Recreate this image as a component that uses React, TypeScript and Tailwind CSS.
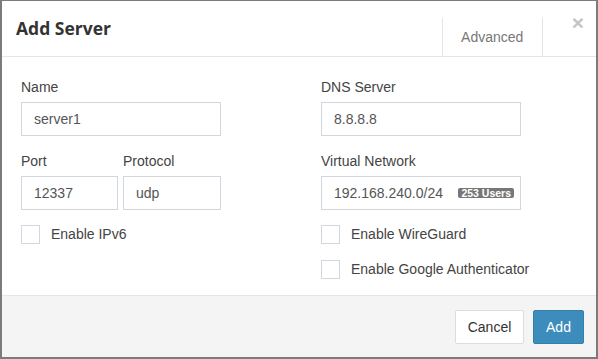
import { useState } from "react"

function Field({ label, value, className = "" }: { label: string; value: string; className?: string }) {
  return (
    <div className={className}>
      <div className="h-[20px] leading-[20px] mb-[5px] text-[14px] text-[#444]">{label}</div>
      <input
        defaultValue={value}
        className="box-border w-full h-[34px] px-[12px] border border-[#d2d6de] text-[14px] text-[#555] outline-none bg-white"
      />
    </div>
  )
}

function Check({ label }: { label: string }) {
  const [on, setOn] = useState(false)
  return (
    <label className="flex items-center h-[19px] cursor-pointer whitespace-nowrap" onClick={() => setOn(!on)}>
      <span className="box-border shrink-0 w-[19px] h-[19px] border border-[#d2d6de] bg-white flex items-center justify-center text-[12px] text-[#3c8dbc]">
        {on ? "✓" : ""}
      </span>
      <span className="ml-[11px] text-[14px] text-[#444]">{label}</span>
    </label>
  )
}

export default function App() {
  return (
    <div className="font-['Liberation_Sans'] box-border w-[598px] h-[359px] flex flex-col bg-white border-[#7b7b7b] border-t border-l-2 border-r-2 border-b-2">
      {/* header */}
      <div className="flex h-[56px] border-b border-[#e5e5e5] pl-[14px] pr-[12px] shrink-0">
        <h4 className="self-center mt-[-1px] font-['Open_Sans'] font-bold text-[17.5px] text-[#333]">Add Server</h4>
        <div className="ml-auto mt-[17px] w-[101px] border-l border-r border-[#e5e5e5] flex items-center justify-center text-[14px] text-[#777]">
          Advanced
        </div>
        <button className="ml-[29px] mt-[11px] self-start leading-[21px] text-[21px] font-bold text-[#c4c4c4]">×</button>
      </div>

      {/* body */}
      <div className="flex-1 pt-[20px] pl-[19px]">
        <div className="grid grid-cols-[200px_200px] gap-x-[100px]">
          <div>
            <Field label="Name" value="server1" />
            <div className="flex gap-[5px] mt-[15px]">
              <Field label="Port" value="12337" className="w-[97px]" />
              <Field label="Protocol" value="udp" className="w-[98px]" />
            </div>
            <div className="mt-[15px]">
              <Check label="Enable IPv6" />
            </div>
          </div>
          <div>
            <Field label="DNS Server" value="8.8.8.8" />
            <div className="mt-[15px] relative">
              <Field label="Virtual Network" value="192.168.240.0/24" />
              <span className="absolute right-[7px] top-[37px] h-[10px] leading-[10px] px-[3px] rounded-[2px] bg-[#777] text-white font-bold text-[10.5px]">
                253 Users
              </span>
            </div>
            <div className="mt-[15px] flex flex-col gap-[16px]">
              <Check label="Enable WireGuard" />
              <Check label="Enable Google Authenticator" />
            </div>
          </div>
        </div>
      </div>

      {/* footer */}
      <div className="h-[62px] shrink-0 border-t border-[#e5e5e5] bg-[#f4f4f4] flex justify-end items-start pt-[14px] pr-[12px] gap-[9px]">
        <button className="box-border h-[34px] w-[69px] border border-[#ddd] bg-white text-[14px] text-[#333] rounded-[2px]">
          Cancel
        </button>
        <button className="box-border h-[34px] w-[51px] border border-[#367fa9] bg-[#3c8dbc] text-[14px] text-white rounded-[2px]">
          Add
        </button>
      </div>
    </div>
  )
}
